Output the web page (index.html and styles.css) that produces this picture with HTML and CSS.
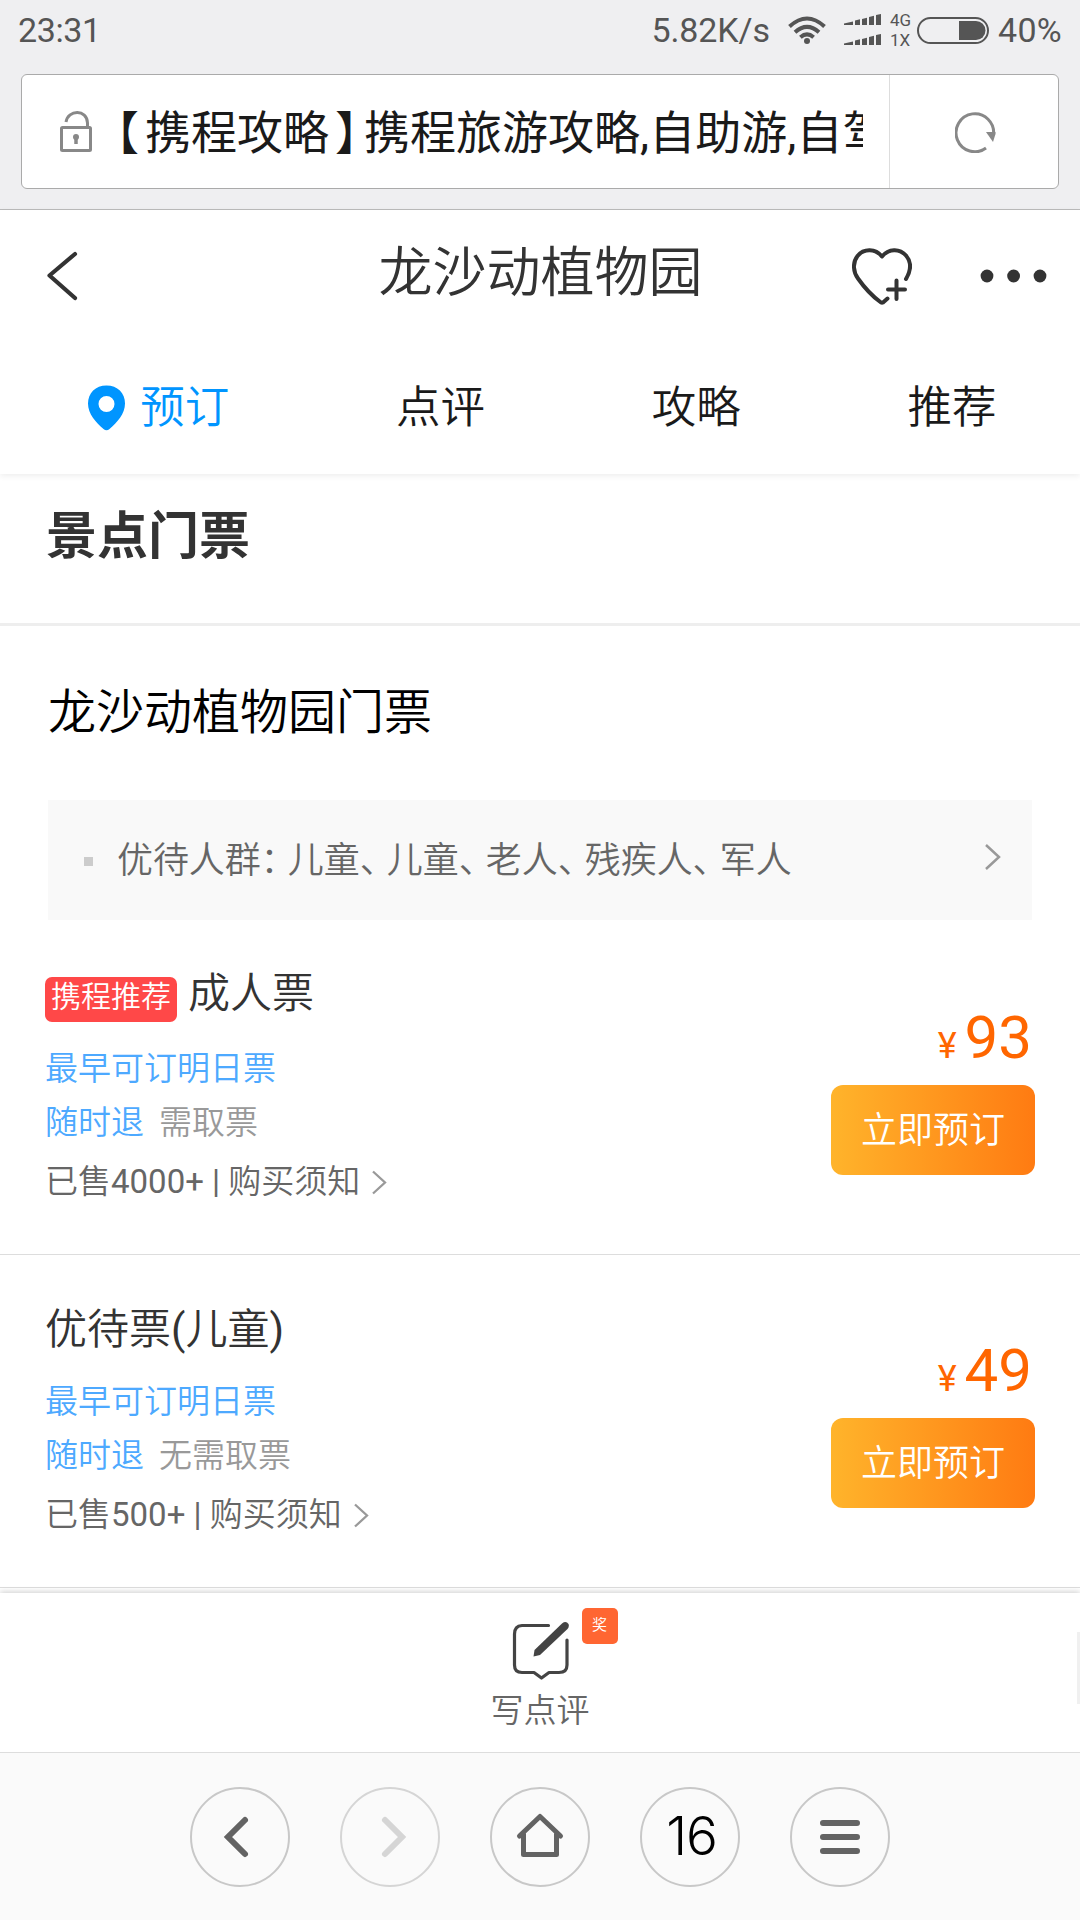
FILE: index.html
```html
<!DOCTYPE html>
<html lang="zh-CN">
<head>
<meta charset="utf-8">
<title>龙沙动植物园</title>
<link rel="stylesheet" href="styles.css">
</head>
<body>
<div class="browser-top">
  <div class="status">
    <span class="clock">23:31</span>
    <span class="speed">5.82K/s</span>
    <svg class="wifi" width="38" height="28" viewBox="0 0 38 28" fill="none" stroke="#555" stroke-width="4">
      <path d="M1.500 10.500Q19-5.500 36.500 10.500M7 16.200Q19 5.500 31 16.200M12.400 21.300Q19 15.500 25.600 21.300"/>
      <circle cx="19" cy="25" r="3" fill="#555" stroke="none"/>
    </svg>
    <svg class="signal" width="38" height="32" viewBox="0 0 38 32" fill="#555">
      <path id="bars" d="M0 9.500L9 7.500V11H0zM11 6.500L16 5.200V11H11zM18 5L23 3.800V11H18zM25 3L30 1.800V11H25zM32 1L37 0V11H32z"/>
      <use href="#bars" y="20"/>
    </svg>
    <span class="network"><span>4G</span><span>1X</span></span>
    <svg class="battery" width="72" height="27" viewBox="0 0 72 27">
      <rect x="1" y="1" width="70" height="25" rx="12.500" fill="none" stroke="#555" stroke-width="2"/>
      <path d="M42 4H59a9.500 9.500 0 0 1 0 19H42z" fill="#555"/>
    </svg>
    <span class="percent">40%</span>
  </div>
  <div class="address">
    <svg class="lock" width="32" height="41" viewBox="0 0 32 41" fill="none" stroke="#888" stroke-width="3">
      <rect x="1.500" y="16.500" width="29" height="23" rx="1"/>
      <path d="M6 11C8-1.500 27-2 27.500 12v4"/>
      <path d="M16 24v9" stroke-width="3.500"/><circle cx="16" cy="26" r="3" fill="#888" stroke="none"/>
    </svg>
    <div class="url"><span class="open">【</span>携程攻略<span class="close">】</span>携程旅游攻略<span class="comma">,</span>自助游<span class="comma">,</span>自驾</div>
    <div class="reload">
      <svg width="42" height="42" viewBox="0 0 42 42" fill="none">
        <path d="M38.500 24A18.800 19 0 1 0 31 37" stroke="#888" stroke-width="3"/>
        <path d="M31 21H40.500V23L38 31z" fill="#888"/>
      </svg>
    </div>
  </div>
</div>

<header class="page-head">
  <div class="title-bar">
    <svg class="back" width="32" height="50" viewBox="0 0 32 50" fill="none" stroke="#333" stroke-width="4.200" stroke-linecap="round" stroke-linejoin="round"><path d="M29 3L3.500 24.500L29 47"/></svg>
    <h1>龙沙动植物园</h1>
    <div class="actions">
      <svg width="60" height="58" viewBox="0 0 60 58" fill="none" stroke="#333" stroke-width="4" stroke-linecap="round" stroke-linejoin="round">
        <path d="M54 32C59 23.500 59.500 15 54 8.500C47.500 1 36.500 1.500 30 9.500C23.500 1.500 12 1 5.500 9C0 16 1.500 25.500 6 31.500C13 41.500 20 49 29 55.500Q30 56 31 55.500L35.500 51.500"/>
        <path d="M44.500 33.500v18.500M36 42.500H53"/>
      </svg>
      <svg width="67" height="14" viewBox="0 0 67 14" fill="#333"><circle cx="7" cy="7" r="6.400"/><circle cx="33.600" cy="7" r="6.400"/><circle cx="60" cy="7" r="6.400"/></svg>
    </div>
  </div>
  <nav class="tabs">
    <a class="tab active"><svg width="37" height="46" viewBox="0 0 37 46"><path fill="#0095ff" fill-rule="evenodd" d="M18.500 0.500C7.500 0.500 0 8 0 18.500C0 29 8 37.500 15.500 44Q18.500 46.500 21.500 44C29 37.500 37 29 37 18.500C37 8 29.500 0.500 18.500 0.500zM18.500 11a8 8 0 1 1 0 16a8 8 0 1 1 0-16z"/></svg>预订</a>
    <a class="tab">点评</a>
    <a class="tab">攻略</a>
    <a class="tab">推荐</a>
  </nav>
</header>

<main>
  <h2 class="section-title">景点门票</h2>
  <h3 class="group-title">龙沙动植物园门票</h3>
  <div class="notice">
    <span class="bullet"></span>
    <p>优待人群<i>：</i>儿童<i>、</i>儿童<i>、</i>老人<i>、</i>残疾人<i>、</i>军人</p>
    <svg width="17" height="28" viewBox="0 0 17 28" fill="none" stroke="#999" stroke-width="2.500"><path d="M2 2L15 14L2 26"/></svg>
  </div>

  <article class="ticket">
    <div class="info">
      <h4><span class="badge">携程推荐</span>成人票</h4>
      <p class="blue">最早可订明日票</p>
      <p class="terms"><span class="blue">随时退</span><span>需取票</span></p>
      <p class="sold"><span>已售<b>4000+ | </b>购买须知</span><svg width="15" height="25" viewBox="0 0 15 25" fill="none" stroke="#999" stroke-width="2.300"><path d="M1 1.500L13 12.500L1 23.500"/></svg></p>
    </div>
    <div class="buy">
      <div class="price"><small>¥</small>93</div>
      <button>立即预订</button>
    </div>
  </article>

  <article class="ticket plain">
    <div class="info">
      <h4><span>优待票<b>(</b>儿童<b>)</b></span></h4>
      <p class="blue">最早可订明日票</p>
      <p class="terms"><span class="blue">随时退</span><span>无需取票</span></p>
      <p class="sold"><span>已售<b>500+ | </b>购买须知</span><svg width="15" height="25" viewBox="0 0 15 25" fill="none" stroke="#999" stroke-width="2.300"><path d="M1 1.500L13 12.500L1 23.500"/></svg></p>
    </div>
    <div class="buy">
      <div class="price"><small>¥</small>49</div>
      <button>立即预订</button>
    </div>
  </article>
</main>

<footer class="review-bar">
  <div class="review">
    <svg width="58" height="60" viewBox="0 0 58 60" fill="none" stroke="#444" stroke-width="3.200" stroke-linecap="round" stroke-linejoin="round">
      <path d="M37.500 4.500H11Q3.500 5 3.500 13V44Q3.500 51.500 11 51.500H23L30.500 57L38 51.500H48Q56 51.500 56 44V19"/>
      <path d="M22.500 35.500L23.500 29L51 2.500Q55-0.500 57.500 3Q58.500 5.500 56.500 8L29 34z" fill="#444" stroke="none"/>
    </svg>
    <span class="label">写点评</span>
    <span class="prize">奖</span>
  </div>
  <div class="side-handle"></div>
</footer>

<nav class="browser-nav">
  <div class="circle"><svg width="100" height="100" viewBox="0 0 100 100" fill="none" stroke="#636363" stroke-width="6" stroke-linecap="round"><path d="M55 33L38 50L55 67"/></svg></div>
  <div class="circle off"><svg width="100" height="100" viewBox="0 0 100 100" fill="none" stroke="#d5d5d5" stroke-width="6" stroke-linecap="round"><path d="M45 33L62 50L45 67"/></svg></div>
  <div class="circle"><svg width="100" height="100" viewBox="0 0 100 100" fill="none" stroke="#636363" stroke-width="5" stroke-linecap="round" stroke-linejoin="round"><path d="M29.500 49L50 29.500L70.500 49M33.500 47V67.500H66.500V47"/></svg></div>
  <div class="circle count">16</div>
  <div class="circle"><svg width="100" height="100" viewBox="0 0 100 100" fill="none" stroke="#636363" stroke-width="6" stroke-linecap="round"><path d="M33 36H67M33 50H67M33 64H67"/></svg></div>
</nav>
</body>
</html>
```
FILE: styles.css
```css
* { box-sizing: border-box; margin: 0; padding: 0; }
body {
  width: 1080px;
  height: 1920px;
  overflow: hidden;
  display: flex;
  flex-direction: column;
  background: #fff;
  color: #333;
  font-family: Roboto, "Noto Sans CJK SC", sans-serif;
  font-weight: 350;
}
b { font-weight: 400; white-space: pre; }
svg { display: block; flex: none; }

.browser-top {
  height: 210px;
  background: #efeff1;
  border-bottom: 1px solid #bbb;
}
.status {
  display: flex;
  align-items: center;
  height: 60px;
  padding: 0 18px 0 18px;
  margin-bottom: 14px;
  color: #555;
  font-size: 34px;
  font-weight: 400;
}
.clock { flex: 1; letter-spacing: -.4px; }
.speed { letter-spacing: -.1px; margin-right: 18px; }
.wifi { margin-right: 18px; }
.signal { margin-right: 8px; }
.network {
  display: flex;
  flex-direction: column;
  width: 27px;
  font-size: 17px;
  line-height: 20px;
}
.battery { margin-right: 9px; }
.percent { letter-spacing: .3px; }

.address {
  display: flex;
  align-items: center;
  height: 115px;
  margin: 0 21px;
  border: 1px solid #aaa;
  border-radius: 6px;
  background: #fff;
}
.lock { margin: 0 1px 0 38px; }
.url {
  width: 770px;
  overflow: hidden;
  white-space: nowrap;
  padding-top: 2px;
  color: #1a1a1a;
  font-size: 46px;
  line-height: 60px;
  font-weight: 400;
}
.open { letter-spacing: 6px; }
.close { margin-left: 6px; letter-spacing: -17px; }
.comma { letter-spacing: .2px; }
.reload {
  flex: 1;
  display: flex;
  align-items: center;
  justify-content: center;
  align-self: stretch;
  margin-left: 26px;
  padding-left: 3px;
  border-left: 1px solid #ddd;
}

.page-head {
  position: relative;
  height: 264px;
  background: #fff;
  box-shadow: 0 2px 6px rgba(0, 0, 0, .07);
}
.title-bar {
  display: grid;
  grid-template-columns: 300px 1fr 300px;
  align-items: center;
  height: 132px;
  padding: 0 33px 0 46px;
}
.title-bar h1 {
  font-size: 54px;
  line-height: 66px;
  font-weight: 350;
  text-align: center;
  white-space: nowrap;
  padding: 0 12px 4px 0;
}
.actions {
  display: flex;
  align-items: center;
  justify-content: flex-end;
  gap: 68px;
}
.tabs {
  display: flex;
  height: 132px;
  padding-left: 31px;
}
.tab {
  display: flex;
  align-items: center;
  justify-content: center;
  width: 256px;
  font-size: 44.500px;
  line-height: 133px;
  color: #1a1a1a;
}
.tab.active { color: #0095ff; gap: 15px; margin-right: 26px; }

.section-title {
  height: 152px;
  padding-left: 46px;
  border-bottom: 3px solid #eee;
  font-size: 51px;
  line-height: 126px;
  font-weight: 700;
}
.group-title {
  height: 174px;
  padding-left: 48px;
  color: #000;
  font-size: 48px;
  line-height: 173px;
  font-weight: 350;
}
.notice {
  display: flex;
  align-items: center;
  height: 120px;
  margin: 0 48px;
  padding: 0 31px 0 36px;
  background: #f9f9f9;
  color: #666;
  font-size: 36px;
}
.notice p { flex: 1; line-height: 120px; padding-top: 2px; letter-spacing: -.1px; }
.notice i { font-style: normal; letter-spacing: -8.800px; }
.notice svg { margin-bottom: 6px; }
.bullet { width: 9px; height: 9px; background: #ccc; margin: 3px 24px 0 0; }

.ticket {
  display: flex;
  justify-content: space-between;
  height: 335px;
  padding: 44px 45px 44px;
  border-bottom: 1px solid #ddd;
}
.ticket h4 {
  display: flex;
  gap: 11px;
  height: 60px;
  margin-bottom: 18px;
  font-size: 42px;
  line-height: 60px;
  font-weight: 350;
}
.ticket.plain { height: 333px; padding-top: 45px; }
.plain h4 { margin-bottom: 15px; }
.badge {
  height: 45px;
  margin-top: 13px;
  padding: 0 6px;
  border-radius: 7px;
  background: #ff4848;
  color: #fff;
  font-size: 30px;
  line-height: 40px;
}
.info p { height: 54px; font-size: 33px; line-height: 54px; }
.info .blue { color: #4da9ff; }
.terms { display: flex; gap: 15px; color: #999; }
.info .sold {
  display: flex;
  align-items: center;
  gap: 12px;
  margin-top: 5px;
  color: #666;
}
.buy {
  display: flex;
  flex-direction: column;
  align-items: flex-end;
  align-self: flex-end;
  padding-bottom: 35px;
}
.price {
  margin: 0 3px 4px 0;
  color: #ff6600;
  font-size: 60px;
  line-height: 70px;
  font-weight: 400;
}
.price small { font-size: 36px; margin-right: 8px; }
.buy button {
  width: 204px;
  height: 90px;
  padding-top: 2px;
  border: 0;
  border-radius: 12px;
  background: linear-gradient(90deg, #ffb42b, #ff7b12);
  color: #fff;
  font: inherit;
  font-size: 36px;
  line-height: 88px;
}

.review-bar {
  position: relative;
  display: flex;
  justify-content: center;
  height: 160px;
  margin-top: 5px;
  background: #fff;
  border-bottom: 1px solid #ddd;
  box-shadow: 0 -1px 6px rgba(0, 0, 0, .2);
}
.review {
  position: relative;
  display: flex;
  flex-direction: column;
  align-items: center;
  padding-top: 28px;
}
.label { margin-top: 3px; color: #666; font-size: 33px; line-height: 54px; }
.prize {
  position: absolute;
  left: 91px;
  top: 15px;
  width: 36px;
  height: 36px;
  border-radius: 5px;
  background: #ff6632;
  color: #fff;
  font-size: 15px;
  line-height: 34px;
  text-align: center;
}
.side-handle {
  position: absolute;
  right: 0;
  top: 39px;
  width: 3px;
  height: 72px;
  background: #f0f0f0;
}

.browser-nav {
  position: relative;
  flex: 1;
  display: flex;
  justify-content: center;
  gap: 50px;
  padding-top: 34px;
  background: #fafafa;
}
.circle {
  display: flex;
  align-items: center;
  justify-content: center;
  width: 100px;
  height: 100px;
  border: 2px solid #c8c8c8;
  border-radius: 50%;
}
.circle.off { border-color: #d5d5d5; }
.count { color: #000; font: 350 53px/96px Inter, sans-serif; padding: 0 0 2px 3px; letter-spacing: -1px; }
```
